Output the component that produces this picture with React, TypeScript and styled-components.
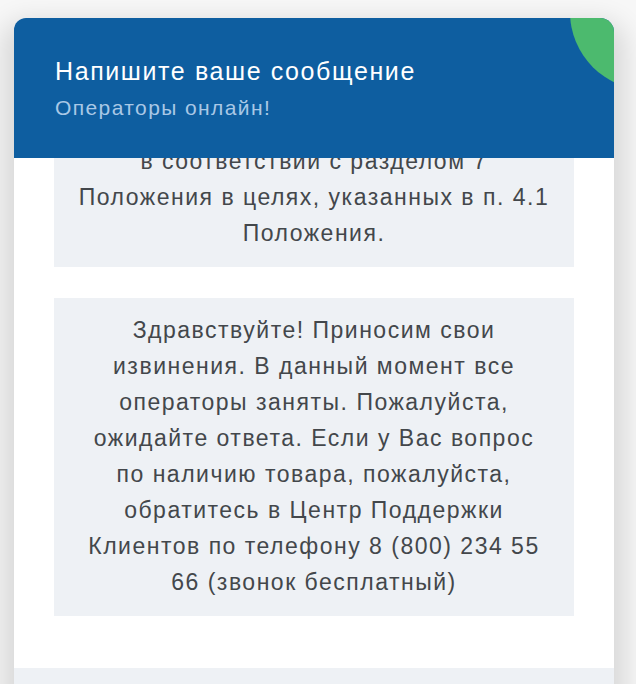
import React from "react";
import styled, { createGlobalStyle } from "styled-components";

const GlobalStyle = createGlobalStyle`
  html, body {
    margin: 0;
    padding: 0;
    background: #f7f7f7;
    overflow: hidden;
    font-family: "Liberation Sans", Arial, sans-serif;
  }
`;

const messages = [
  "Нажимая кнопку «Начать», я даю согласие на обработку моих персональных данных\nв соответствии с разделом 7 Положения в целях, указанных в п. 4.1 Положения.",
  "Здравствуйте! Приносим свои извинения. В данный момент все операторы заняты. Пожалуйста, ожидайте ответа. Если у Вас вопрос по наличию товара, пожалуйста, обратитесь в Центр Поддержки Клиентов по телефону 8 (800) 234 55 66 (звонок бесплатный)",
];

const App = () => {
  return (
    <>
      <GlobalStyle />
      <Page>
        <Chat>
          <Header>
            <Blob />
            <Title>Напишите ваше сообщение</Title>
            <Status>Операторы онлайн!</Status>
          </Header>
          <Messages>
            {messages.map((m, i) => (
              <Bubble key={i}>{m}</Bubble>
            ))}
          </Messages>
          <InputBar />
        </Chat>
      </Page>
    </>
  );
};

const Page = styled.div`
  padding: 18px 22px 0 14px;
`;

const Chat = styled.div`
  width: 600px;
  height: 720px;
  display: flex;
  flex-direction: column;
  background: #fff;
  border-radius: 12px 14px 0 0;
  box-shadow: 0 14px 26px 12px rgba(0, 0, 0, 0.12);
  overflow: hidden;
`;

const Header = styled.div`
  position: relative;
  flex: 0 0 140px;
  box-sizing: border-box;
  padding: 40px 41px 0;
  background: #0e5ea0;
  overflow: hidden;
  z-index: 1;
`;

const Blob = styled.div`
  position: absolute;
  left: 556px;
  top: -84px;
  width: 156px;
  height: 156px;
  border-radius: 50%;
  background: #4cba6e;
`;

const Title = styled.div`
  position: relative;
  color: #fff;
  font-size: 25px;
  letter-spacing: 1.6px;
  line-height: 1.1;
`;

const Status = styled.div`
  position: relative;
  margin-top: 10px;
  color: #a9c8e6;
  font-size: 21px;
  letter-spacing: 1.4px;
  line-height: 1.1;
`;

const Messages = styled.div`
  flex: 1;
  min-height: 0;
  display: flex;
  flex-direction: column;
  justify-content: flex-end;
  gap: 31px;
  padding: 0 40px 52px;
  overflow: hidden;
`;

const Bubble = styled.div`
  flex: none;
  padding: 14px 22px 16px;
  background: #eef1f5;
  color: #43474b;
  font-size: 23px;
  letter-spacing: 1.5px;
  line-height: 36px;
  text-align: center;
  white-space: pre-line;
`;

const InputBar = styled.div`
  flex: 0 0 70px;
  background: #eef1f5;
`;

export default App;
